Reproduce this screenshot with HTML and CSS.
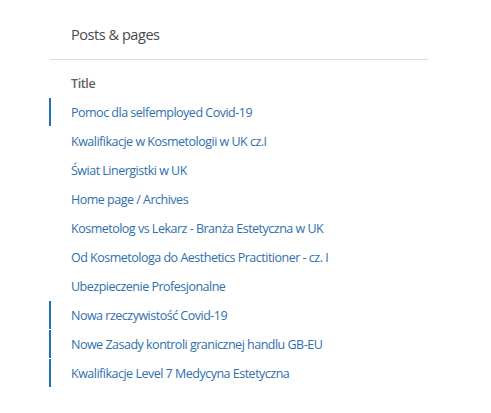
FILE: index.html
```html
<!DOCTYPE html>
<html lang="pl">
<head>
<meta charset="utf-8">
<title>Posts &amp; pages</title>
<link rel="stylesheet" href="styles.css">
</head>
<body>
<section class="card">
  <h2 class="card-title">Posts &amp; pages</h2>
  <div class="list">
    <div class="list-head">Title</div>
    <a class="row hl" href="#">Pomoc dla selfemployed Covid-19</a>
    <a class="row" href="#">Kwalifikacje w Kosmetologii w UK cz.I</a>
    <a class="row" href="#">Świat Linergistki w UK</a>
    <a class="row" href="#">Home page / Archives</a>
    <a class="row" href="#">Kosmetolog vs Lekarz - Branża Estetyczna w UK</a>
    <a class="row" href="#">Od Kosmetologa do Aesthetics Practitioner - cz. I</a>
    <a class="row" href="#">Ubezpieczenie Profesjonalne</a>
    <a class="row hl" href="#">Nowa rzeczywistość Covid-19</a>
    <a class="row hl" href="#">Nowe Zasady kontroli granicznej handlu GB-EU</a>
    <a class="row hl" href="#">Kwalifikacje Level 7 Medycyna Estetyczna</a>
  </div>
</section>
</body>
</html>
```
FILE: styles.css
```css
html, body {
  margin: 0;
  padding: 0;
  background: #fff;
}
body {
  font-family: "Open Sans", "Noto Sans", "Liberation Sans", sans-serif;
}
.card {
  margin-left: 49px;
  width: 379px;
}
.card-title {
  margin: 0 0 0 1px;
  padding: 25px 0 14px 21px;
  font-size: 14.5px;
  line-height: 20px;
  font-weight: 400;
  letter-spacing: -0.45px;
  color: #4a4a4a;
  border-bottom: 1px solid #dcdcdc;
}
.list {
  padding-top: 9px;
  display: flex;
  flex-direction: column;
}
.list-head {
  padding-left: 22px;
  height: 29px;
  line-height: 30px;
  font-size: 12.5px;
  font-weight: 600;
  letter-spacing: -0.4px;
  color: #5f5f5f;
}
.row {
  display: block;
  height: 28px;
  line-height: 30px;
  margin-bottom: 1px;
  padding-left: 20px;
  border-left: 2px solid transparent;
  font-size: 12.5px;
  letter-spacing: -0.5px;
  color: #2f6fad;
  text-decoration: none;
  white-space: nowrap;
  overflow: hidden;
}
.row.hl {
  border-left-color: #2271b1;
}
```
